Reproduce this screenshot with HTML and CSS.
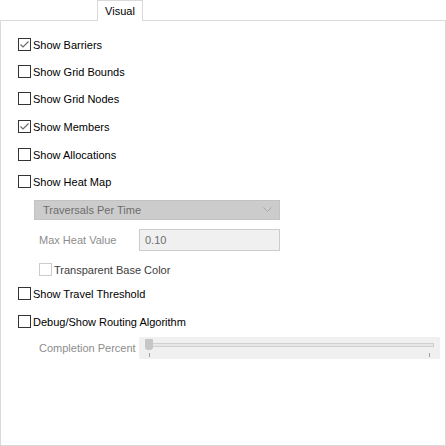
FILE: index.html
```html
<!DOCTYPE html>
<html lang="en">
<head>
  <meta charset="UTF-8" />
  <title>Visual</title>
  <link rel="stylesheet" href="styles.css">
</head>
<body>
  <div class="tabs">
    <div class="tab">Visual</div>
  </div>
  <div class="panel">
    <label class="check"><span class="box checked"><svg width="11" height="11" viewBox="0 0 11 11"><path d="M1.5 5.5 L4 8 L9.5 2.5" fill="none" stroke="#6b6b6b" stroke-width="1.2"/></svg></span>Show Barriers</label>
    <label class="check"><span class="box"></span>Show Grid Bounds</label>
    <label class="check"><span class="box"></span>Show Grid Nodes</label>
    <label class="check gap-15"><span class="box checked"><svg width="11" height="11" viewBox="0 0 11 11"><path d="M1.5 5.5 L4 8 L9.5 2.5" fill="none" stroke="#6b6b6b" stroke-width="1.2"/></svg></span>Show Members</label>
    <label class="check gap-15"><span class="box"></span>Show Allocations</label>
    <label class="check"><span class="box"></span>Show Heat Map</label>

    <div class="select">
      <span>Traversals Per Time</span>
      <svg width="9" height="6" viewBox="0 0 9 6"><path d="M0.5 0.5 L4.5 4.5 L8.5 0.5" fill="none" stroke="#a8a8a8" stroke-width="1"/></svg>
    </div>
    <div class="field">
      <span class="field-label">Max Heat Value</span>
      <div class="textbox">0.10</div>
    </div>
    <label class="check sub disabled"><span class="box"></span>Transparent Base Color</label>

    <label class="check after-sub"><span class="box"></span>Show Travel Threshold</label>
    <label class="check gap-15"><span class="box"></span>Debug/Show Routing Algorithm</label>

    <div class="field slider-row">
      <span class="field-label">Completion Percent</span>
      <div class="slider">
        <div class="track"></div>
        <div class="thumb"></div>
        <div class="tick tick-start"></div>
        <div class="tick tick-end"></div>
      </div>
    </div>
  </div>
</body>
</html>
```

FILE: styles.css
```css
* { box-sizing: border-box; }
body {
  margin: 0;
  padding: 0;
  background: #fff;
  font-family: "Liberation Sans", Arial, sans-serif;
  font-size: 11px;
  color: #000;
  width: 446px;
  height: 446px;
  overflow: hidden;
}
.tabs {
  height: 20px;
  padding-left: 97px;
  position: relative;
  z-index: 1;
}
.tab {
  width: 46px;
  height: 21px;
  border: 1px solid #d9d9d9;
  border-bottom: none;
  background: #fff;
  text-align: center;
  line-height: 19px;
  padding-top: 1px;
}
.panel {
  height: 426px;
  border: 1px solid #d9d9d9;
  padding: 17px 0 0 17px;
  display: flex;
  flex-direction: column;
  align-items: flex-start;
}
.check {
  display: flex;
  align-items: center;
  height: 13px;
  margin-top: 14px;
  white-space: nowrap;
}
.check:first-child { margin-top: 0; }
.check.gap-15 { margin-top: 15px; }
.box {
  width: 13px;
  height: 13px;
  border: 1px solid #333;
  background: #fff;
  margin-right: 2px;
  display: flex;
  align-items: center;
  justify-content: center;
  flex-shrink: 0;
}
.check.disabled .box { border-color: #cccccc; }
.check.disabled { color: #3c3c3c; }
.check.sub { margin-left: 21px; margin-top: 12px; }
.check.after-sub { margin-top: 11px; }

.select {
  margin-top: 12px;
  margin-left: 16px;
  width: 246px;
  height: 20px;
  background: #cccccc;
  border: 1px solid #c2c2c2;
  color: #6d6d6d;
  display: flex;
  align-items: center;
  justify-content: space-between;
  padding: 0 7px 0 8px;
}
.field {
  display: flex;
  align-items: center;
  margin-top: 9px;
  margin-left: 21px;
}
.field-label {
  width: 100px;
  color: #8d8d8d;
}
.textbox {
  width: 141px;
  height: 22px;
  background: #f0f0f0;
  border: 1px solid #cccccc;
  color: #6d6d6d;
  padding-left: 5px;
  line-height: 20px;
}
.slider-row { margin-top: 9px; }
.slider {
  position: relative;
  width: 301px;
  height: 22px;
  background: #f0f0f0;
}
.track {
  position: absolute;
  left: 7px;
  right: 6px;
  top: 6px;
  height: 4px;
  background: #e7e7e7;
  border: 1px solid #d0d0d0;
}
.thumb {
  position: absolute;
  left: 6px;
  top: 2px;
  width: 8px;
  height: 11px;
  background: #c6c6c6;
  border-radius: 1px 1px 3px 3px;
}
.tick {
  position: absolute;
  top: 16px;
  width: 1px;
  height: 4px;
  background: #a0a0a0;
}
.tick-start { left: 10px; }
.tick-end { right: 10px; }
```
